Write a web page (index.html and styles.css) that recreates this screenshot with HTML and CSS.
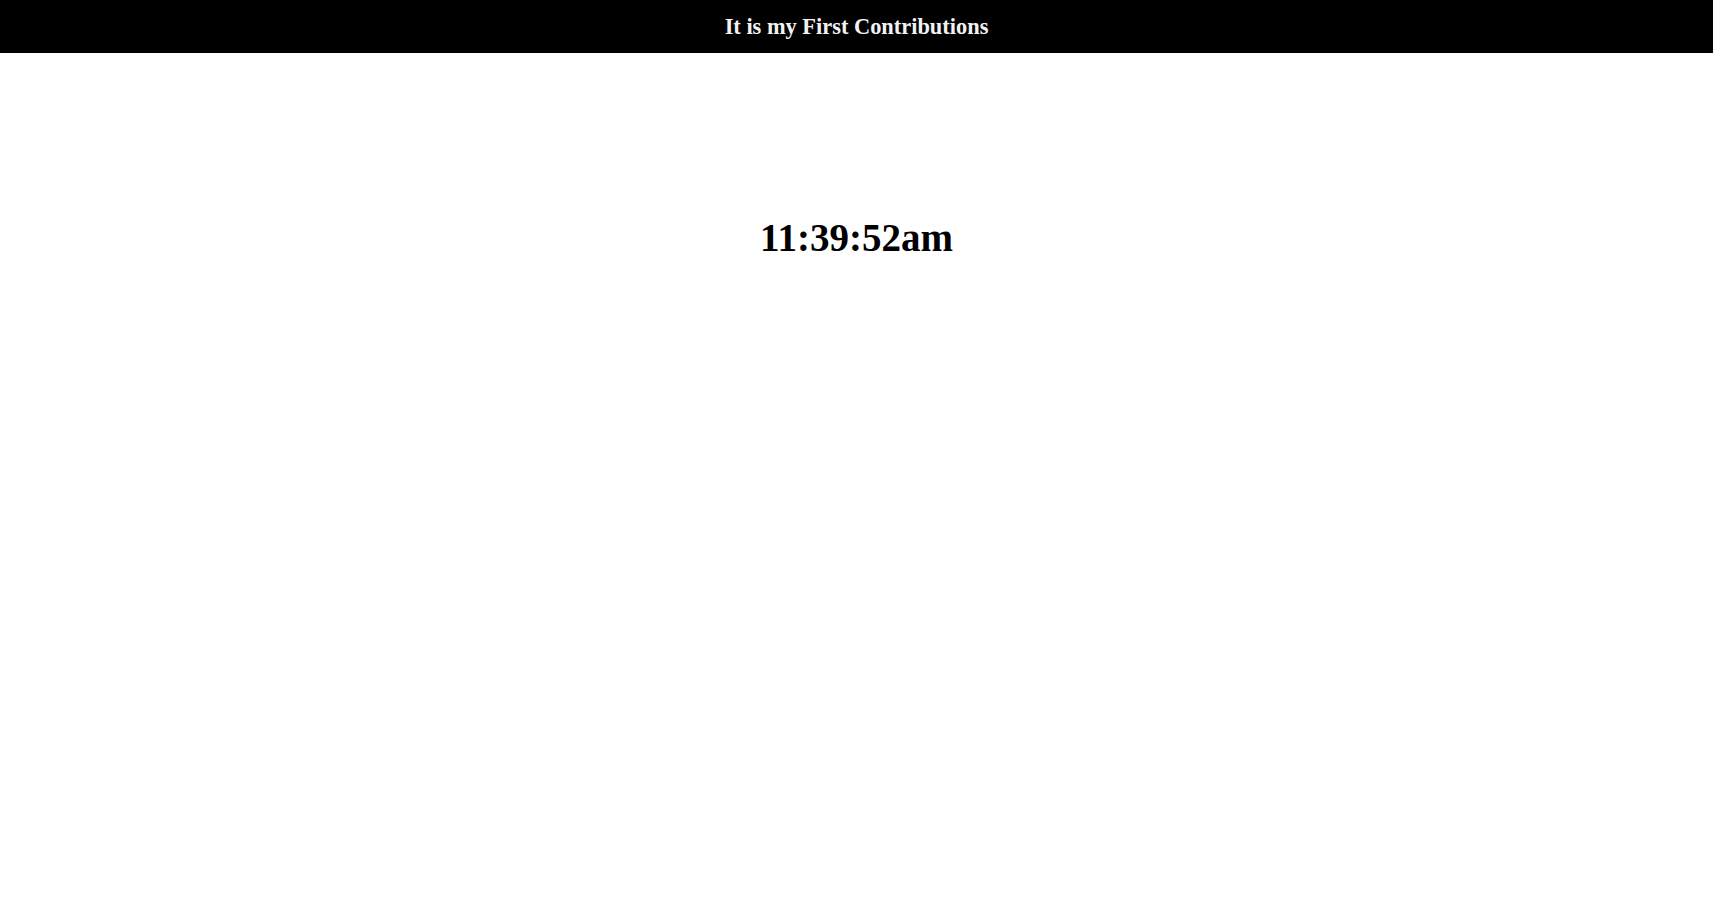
FILE: index.html
```html
<!DOCTYPE html>
<html>
<head>
<meta charset="utf-8">
<link rel="stylesheet" href="styles.css">
</head>
<body>
<header class="topbar">
  <h1 class="title">It is my First Contributions</h1>
</header>
<main class="content">
  <div class="clock">11:39:52am</div>
</main>
</body>
</html>
```
FILE: styles.css
```css
html, body {
  margin: 0;
  padding: 0;
  background: #fff;
  font-family: "Liberation Serif", "Times New Roman", serif;
}
.topbar {
  background: #000;
  height: 53px;
  display: flex;
  align-items: center;
  justify-content: center;
}
.title {
  margin: 0;
  color: #f2f2f2;
  font-size: 22.4px;
  font-weight: bold;
}
.content {
  display: flex;
  justify-content: center;
  padding-top: 165px;
}
.clock {
  font-size: 39px;
  font-weight: bold;
  color: #000;
  line-height: 1;
}
```
